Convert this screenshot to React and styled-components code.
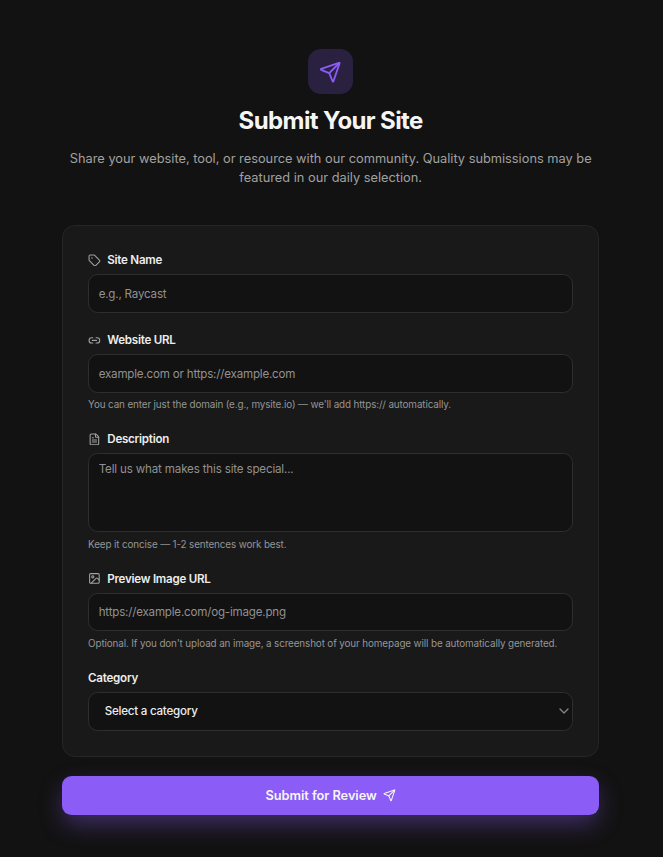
import React from 'react'
import styled, { createGlobalStyle } from 'styled-components'
import { Send, Tag, Link2, FileText, Image, ChevronDown } from 'lucide-react'

const GlobalStyle = createGlobalStyle`
* {
  box-sizing: border-box;
}
body {
  margin: 0;
  background: #121212;
  color: #ededed;
  font-family: Inter, sans-serif;
}
input, textarea, select, button {
  font-family: inherit;
}
`

const Page = styled.main`
width: 661.4px;
min-height: 857px;
padding: 49.2px 0 40px;
display: flex;
flex-direction: column;
align-items: center;
`

const Header = styled.header`
width: 537.6px;
display: flex;
flex-direction: column;
align-items: center;
text-align: center;
`

const Badge = styled.div`
width: 44.8px;
height: 44.8px;
display: flex;
align-items: center;
justify-content: center;
border-radius: 12.8px;
background: #2a2040;
color: #8b5cf6;

svg {
  margin-top: 1px;
}
`

const Title = styled.h1`
margin: 12.8px 0 0;
font-size: 24px;
line-height: 28.8px;
font-weight: 700;
letter-spacing: -0.6px;
color: #f5f5f5;
`

const Subtitle = styled.p`
margin: 13.2px 0 0;
font-size: 12.8px;
line-height: 19.2px;
color: #a1a1a1;
`

const Form = styled.form`
width: 537.6px;
margin-top: 38.2px;
display: flex;
flex-direction: column;
gap: 19.2px;
`

const Card = styled.section`
padding: 25.6px 25.6px 25.2px 25.2px;
display: flex;
flex-direction: column;
gap: 19.2px;
border: 1px solid #262626;
border-radius: 12.8px;
background: #191919;
backdrop-filter: blur(4px);
`

const Field = styled.div`
display: flex;
flex-direction: column;
gap: 6.4px;
`

const Label = styled.label`
display: flex;
align-items: center;
gap: 6.4px;
font-size: 11.6px;
line-height: 16px;
font-weight: 600;
letter-spacing: -0.25px;
color: #ededed;

svg {
  color: #a1a1a1;
}
`

const Input = styled.input`
width: 100%;
height: 38.4px;
padding: 0 9.6px;
border: 1px solid #2e2e2e;
border-radius: 9.6px;
outline: none;
background: #121212;
color: #ededed;
font-size: 11.6px;
letter-spacing: -0.2px;

&::placeholder {
  color: #919191;
  opacity: 1;
}
`

const Textarea = styled(Input).attrs({ as: 'textarea' })`
height: 78.8px;
padding: 6.4px 9.6px;
line-height: 16px;
letter-spacing: -0.17px;
resize: none;
display: block;
`

const Hint = styled.p`
margin: 0;
padding-bottom: 1.6px;
font-size: 9.9px;
line-height: 11.2px;
letter-spacing: -0.13px;
white-space: nowrap;
color: #959595;
`

const SelectBox = styled.button`
width: 100%;
height: 38.4px;
padding: 0 0 0 15.6px;
display: flex;
align-items: center;
justify-content: space-between;
border: 1px solid #2e2e2e;
border-radius: 9.6px;
background: #121212;
color: #ededed;
font-size: 11.6px;
font-weight: 500;
letter-spacing: -0.24px;

svg {
  color: #858585;
}
`

const SubmitButton = styled.button`
height: 38.6px;
display: flex;
align-items: center;
justify-content: center;
gap: 6.4px;
border: none;
border-radius: 9.6px;
background: #8b5cf6;
color: #f5f5f5;
font-size: 12.8px;
font-weight: 600;
letter-spacing: -0.05px;
box-shadow: 0 10px 24px -2px rgba(139, 92, 246, 0.4);
cursor: pointer;
`

export default function App() {
  return (
    <>
      <GlobalStyle />
      <Page>
        <Header>
          <Badge>
            <Send size={22.4} strokeWidth={2} />
          </Badge>
          <Title>Submit Your Site</Title>
          <Subtitle>
            Share your website, tool, or resource with our community. Quality submissions may be featured in our daily selection.
          </Subtitle>
        </Header>
        <Form onSubmit={(e) => e.preventDefault()}>
          <Card>
            <Field>
              <Label htmlFor="name"><Tag size={12.8} />Site Name</Label>
              <Input id="name" placeholder="e.g., Raycast" />
            </Field>
            <Field>
              <Label htmlFor="url"><Link2 size={12.8} />Website URL</Label>
              <Input id="url" placeholder="example.com or https://example.com" />
              <Hint>You can enter just the domain (e.g., mysite.io) — we'll add https:// automatically.</Hint>
            </Field>
            <Field>
              <Label htmlFor="description"><FileText size={12.8} />Description</Label>
              <Textarea id="description" placeholder="Tell us what makes this site special..." />
              <Hint>Keep it concise — 1-2 sentences work best.</Hint>
            </Field>
            <Field>
              <Label htmlFor="image"><Image size={12.8} />Preview Image URL</Label>
              <Input id="image" placeholder="https://example.com/og-image.png" />
              <Hint>Optional. If you don't upload an image, a screenshot of your homepage will be automatically generated.</Hint>
            </Field>
            <Field>
              <Label htmlFor="category">Category</Label>
              <SelectBox id="category" type="button">
                Select a category
                <ChevronDown size={16} />
              </SelectBox>
            </Field>
          </Card>
          <SubmitButton type="submit">
            Submit for Review
            <Send size={12.8} />
          </SubmitButton>
        </Form>
      </Page>
    </>
  )
}
